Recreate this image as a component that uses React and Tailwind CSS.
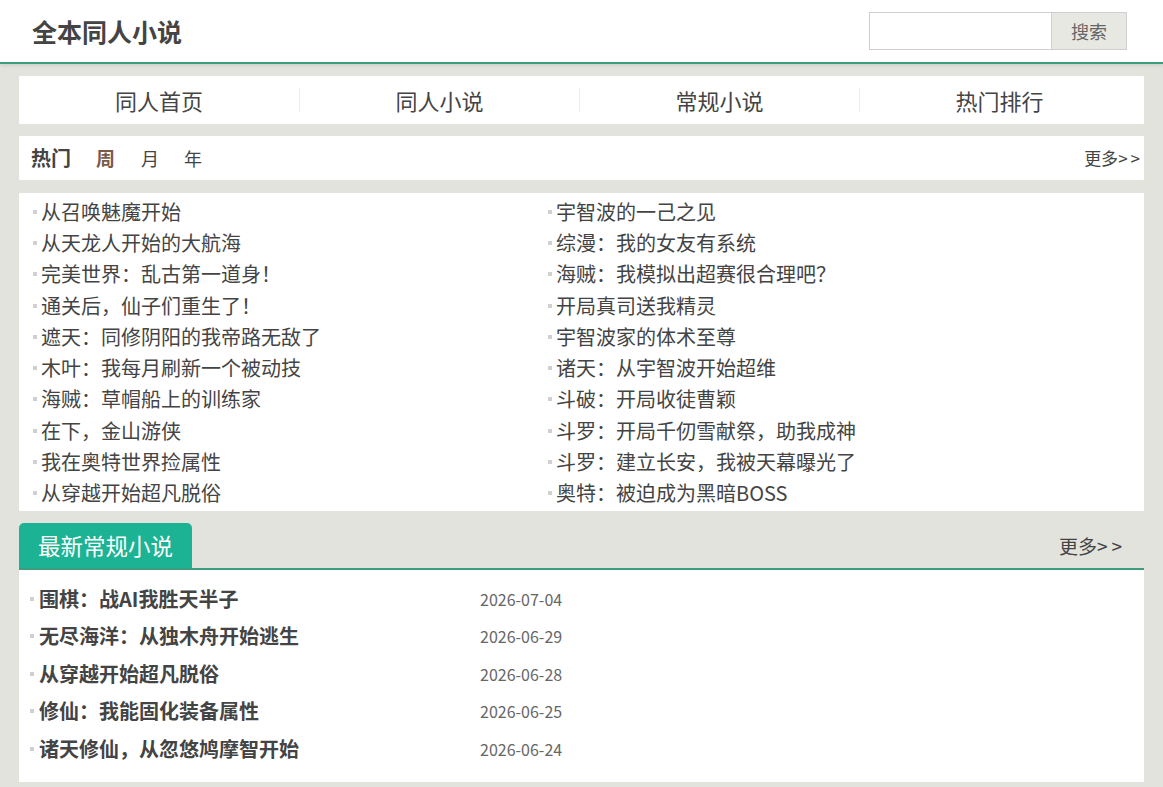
const hotLeft = [
  "从召唤魅魔开始",
  "从天龙人开始的大航海",
  "完美世界：乱古第一道身！",
  "通关后，仙子们重生了！",
  "遮天：同修阴阳的我帝路无敌了",
  "木叶：我每月刷新一个被动技",
  "海贼：草帽船上的训练家",
  "在下，金山游侠",
  "我在奥特世界捡属性",
  "从穿越开始超凡脱俗",
];

const hotRight = [
  "宇智波的一己之见",
  "综漫：我的女友有系统",
  "海贼：我模拟出超赛很合理吧？",
  "开局真司送我精灵",
  "宇智波家的体术至尊",
  "诸天：从宇智波开始超维",
  "斗破：开局收徒曹颖",
  "斗罗：开局千仞雪献祭，助我成神",
  "斗罗：建立长安，我被天幕曝光了",
  "奥特：被迫成为黑暗BOSS",
];

const latest = [
  { title: "围棋：战AI我胜天半子", date: "2026-07-04" },
  { title: "无尽海洋：从独木舟开始逃生", date: "2026-06-29" },
  { title: "从穿越开始超凡脱俗", date: "2026-06-28" },
  { title: "修仙：我能固化装备属性", date: "2026-06-25" },
  { title: "诸天修仙，从忽悠鸠摩智开始", date: "2026-06-24" },
];

const navItems = ["同人首页", "同人小说", "常规小说", "热门排行"];

function HotItem({ text }) {
  return (
    <li className="flex items-center h-[31.3px]">
      <span className="w-[4px] h-[4px] bg-[#d0d0d0] mr-[4px]" />
      <span className="text-[20px] text-[#444]">{text}</span>
    </li>
  );
}

export default function App() {
  return (
    <div
      className="min-h-[787px] bg-[#e3e3dd] text-[#333]"
      style={{ fontFamily: '"Noto Sans CJK SC", "Noto Sans", sans-serif' }}
    >
      {/* header */}
      <header className="bg-white h-[64px] border-b-2 border-[#3d9d7d] flex items-center justify-between pl-[32px] pr-[36px] shadow-[0_2px_3px_rgba(0,0,0,0.08)]">
        <h1 className="text-[25px] font-bold text-[#444] leading-none">全本同人小说</h1>
        <div className="flex">
          <input className="w-[183px] h-[38px] border border-[#cfcfcf] bg-white outline-none" />
          <button className="w-[75px] h-[38px] border border-[#cfcfcf] border-l-0 bg-[#e8e8e2] text-[18px] text-[#666]">
            搜索
          </button>
        </div>
      </header>

      <main className="px-[19px] pt-[12px] pb-[5px]">
        {/* nav */}
        <nav className="bg-white h-[48px] flex items-center">
          {navItems.map((n, i) => (
            <div key={n} className="w-[280px] flex items-center">
              {i > 0 && <span className="w-px h-[24px] bg-[#ececec]" />}
              <span className="flex-1 text-center text-[22px] text-[#444]">{n}</span>
            </div>
          ))}
        </nav>

        {/* hot bar */}
        <div className="bg-white h-[44px] mt-[12px] flex items-center justify-between pl-[12px] pr-[1px]">
          <div className="flex items-center">
            <span className="text-[20px] font-bold text-[#444]">热门</span>
            <span className="ml-[25px] text-[19px] font-bold text-[#7a5a4a]">周</span>
            <span className="ml-[26px] text-[18px] text-[#444]">月</span>
            <span className="ml-[25px] text-[18px] text-[#444]">年</span>
          </div>
          <span className="text-[17px] text-[#444]">
            更多<span className="tracking-[3px]">&gt;&gt;</span>
          </span>
        </div>

        {/* hot list */}
        <div className="bg-white mt-[13px] h-[318px] pt-[3px] pl-[14px] flex">
          <ul className="w-[515px]">
            {hotLeft.map((t) => (
              <HotItem key={t} text={t} />
            ))}
          </ul>
          <ul>
            {hotRight.map((t) => (
              <HotItem key={t} text={t} />
            ))}
          </ul>
        </div>

        {/* latest section */}
        <div className="mt-[12px] flex items-end justify-between border-b-2 border-[#3d9d7d]">
          <div className="h-[45px] px-[19px] bg-[#1cb394] rounded-t-[5px] flex items-center">
            <span className="text-[22.5px] text-white">最新常规小说</span>
          </div>
          <span className="text-[19px] text-[#444] mr-[18px] mb-[8px]">
            更多<span className="tracking-[4px]">&gt;&gt;</span>
          </span>
        </div>
        <ul className="bg-white pt-[10px] pb-[14px] pl-[11px]">
          {latest.map((b) => (
            <li key={b.title} className="flex items-center h-[37.5px]">
              <span className="w-[4px] h-[4px] bg-[#d0d0d0] mr-[5px]" />
              <span className="w-[441px] text-[20px] font-bold text-[#444]">{b.title}</span>
              <span className="text-[16px] text-[#666]">{b.date}</span>
            </li>
          ))}
        </ul>
      </main>
    </div>
  );
}
